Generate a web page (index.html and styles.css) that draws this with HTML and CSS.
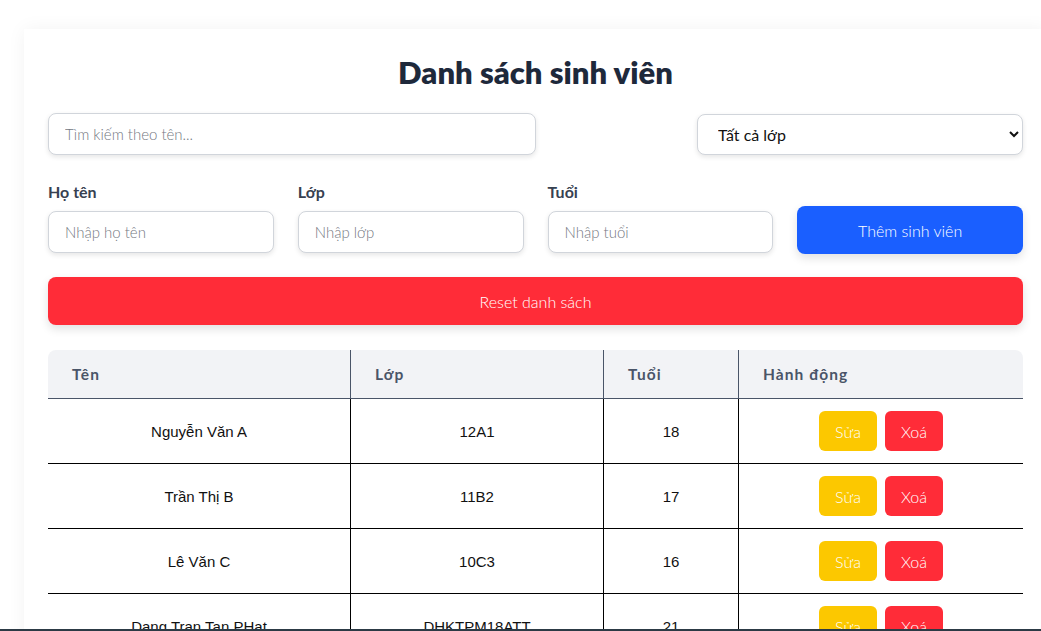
FILE: index.html
```html
<!DOCTYPE html>
<html lang="vi">
<head>
<meta charset="utf-8">
<title>Danh sách sinh viên</title>
<link rel="stylesheet" href="styles.css">
</head>
<body>
<div class="card">
  <h1 class="title">Danh sách sinh viên</h1>
  <div class="filters">
    <input class="field search" type="text" placeholder="Tìm kiếm theo tên...">
    <select class="field class-select">
      <option>Tất cả lớp</option>
    </select>
  </div>
  <div class="form">
    <div class="group">
      <label class="label">Họ tên</label>
      <input class="field" type="text" placeholder="Nhập họ tên">
    </div>
    <div class="group">
      <label class="label">Lớp</label>
      <input class="field" type="text" placeholder="Nhập lớp">
    </div>
    <div class="group">
      <label class="label">Tuổi</label>
      <input class="field" type="text" placeholder="Nhập tuổi">
    </div>
    <button class="btn btn-add">Thêm sinh viên</button>
  </div>
  <button class="btn btn-reset">Reset danh sách</button>
  <table class="table">
    <thead>
      <tr>
        <th class="col-name">Tên</th>
        <th class="col-class">Lớp</th>
        <th class="col-age">Tuổi</th>
        <th class="col-act">Hành động</th>
      </tr>
    </thead>
    <tbody>
      <tr>
        <td>Nguyễn Văn A</td><td>12A1</td><td>18</td>
        <td><div class="actions"><button class="mini edit">Sửa</button><button class="mini del">Xoá</button></div></td>
      </tr>
      <tr>
        <td>Trần Thị B</td><td>11B2</td><td>17</td>
        <td><div class="actions"><button class="mini edit">Sửa</button><button class="mini del">Xoá</button></div></td>
      </tr>
      <tr>
        <td>Lê Văn C</td><td>10C3</td><td>16</td>
        <td><div class="actions"><button class="mini edit">Sửa</button><button class="mini del">Xoá</button></div></td>
      </tr>
      <tr>
        <td>Dang Tran Tan PHat</td><td>DHKTPM18ATT</td><td>21</td>
        <td><div class="actions"><button class="mini edit">Sửa</button><button class="mini del">Xoá</button></div></td>
      </tr>
    </tbody>
  </table>
</div>
<div class="bottom-line"></div>
</body>
</html>
```
FILE: styles.css
```css
* { box-sizing: border-box; }
html, body { margin: 0; padding: 0; background: #ffffff; overflow-x: hidden; }
body { font-family: Lato, "Noto Sans", sans-serif; color: #1f2937; }

.card {
  width: 1023px;
  margin: 29px 0 0 24px;
  padding: 25px 24px 40px;
  background: #fff;
  box-shadow: 0 0 18px rgba(0, 0, 0, 0.05);
}

.title {
  margin: 0 0 23px;
  text-align: center;
  font-size: 31px;
  font-weight: 800;
  color: #1e293b;
  line-height: 36px;
}

.field {
  display: block;
  width: 100%;
  height: 42px;
  padding: 0 16px;
  border: 1px solid #d1d5db;
  border-radius: 8px;
  background: #fff;
  font-family: Lato, "Noto Sans", sans-serif;
  font-size: 15px;
  font-weight: 300;
  color: #111;
  box-shadow: 0 2px 5px rgba(0, 0, 0, 0.1);
  outline: none;
}
.field::placeholder { color: #74787f; font-weight: 300; }

.filters {
  display: flex;
  justify-content: space-between;
  align-items: center;
}
.search { width: 488px; }
.class-select {
  width: 326px;
  height: 41px;
  padding: 0 14px 0 16px;
  font-size: 16px;
  font-weight: 400;
  color: #111;
}

.form {
  display: grid;
  grid-template-columns: repeat(4, 1fr);
  gap: 24px;
  align-items: end;
  margin-top: 26px;
}
.group { display: flex; flex-direction: column; gap: 8px; }
.label {
  font-size: 16px;
  font-weight: 700;
  color: #374151;
  line-height: 22px;
}

.btn {
  display: block;
  border: none;
  border-radius: 8px;
  color: #fff;
  font-family: Lato, "Noto Sans", sans-serif;
  font-size: 16px;
  font-weight: 300;
  cursor: pointer;
}
.btn-add {
  height: 48px;
  background: #1a5fff;
  box-shadow: 0 4px 10px rgba(0, 0, 0, 0.12);
  margin-bottom: -1px;
}
.btn-reset {
  width: 100%;
  height: 48px;
  margin-top: 24px;
  background: #ff2c38;
  box-shadow: 0 4px 10px rgba(0, 0, 0, 0.12);
}

.table {
  width: 100%;
  margin-top: 25px;
  border-collapse: separate;
  border-spacing: 0;
}
.table th {
  height: 49px;
  padding: 0 24px;
  background: #f2f3f6;
  text-align: left;
  font-size: 15.5px;
  font-weight: 700;
  letter-spacing: 0.07em;
  color: #4a5568;
  border-bottom: 1px solid #4a5568;
}
.table th + th { border-left: 1px solid #4a5568; }
.table th:first-child { border-top-left-radius: 8px; }
.table th:last-child { border-top-right-radius: 8px; }
.col-name { width: 302px; }
.col-class { width: 253px; }
.col-age { width: 135px; }

.table td {
  height: 65px;
  text-align: center;
  font-family: "Liberation Sans", Arial, sans-serif;
  font-size: 15px;
  font-weight: 400;
  color: #111;
  border-bottom: 1px solid #000;
}
.table td + td { border-left: 1px solid #000; }

.actions { display: flex; justify-content: center; gap: 8px; }
.mini {
  width: 58px;
  height: 40px;
  border: none;
  border-radius: 6px;
  color: #fff;
  font-family: Lato, "Noto Sans", sans-serif;
  font-size: 16px;
  font-weight: 300;
}
.edit { background: #fcc800; }
.del { background: #ff2c38; }

.bottom-line {
  position: fixed;
  left: 0;
  right: 0;
  bottom: 0;
  height: 2px;
  background: #2c3a45;
}
```
